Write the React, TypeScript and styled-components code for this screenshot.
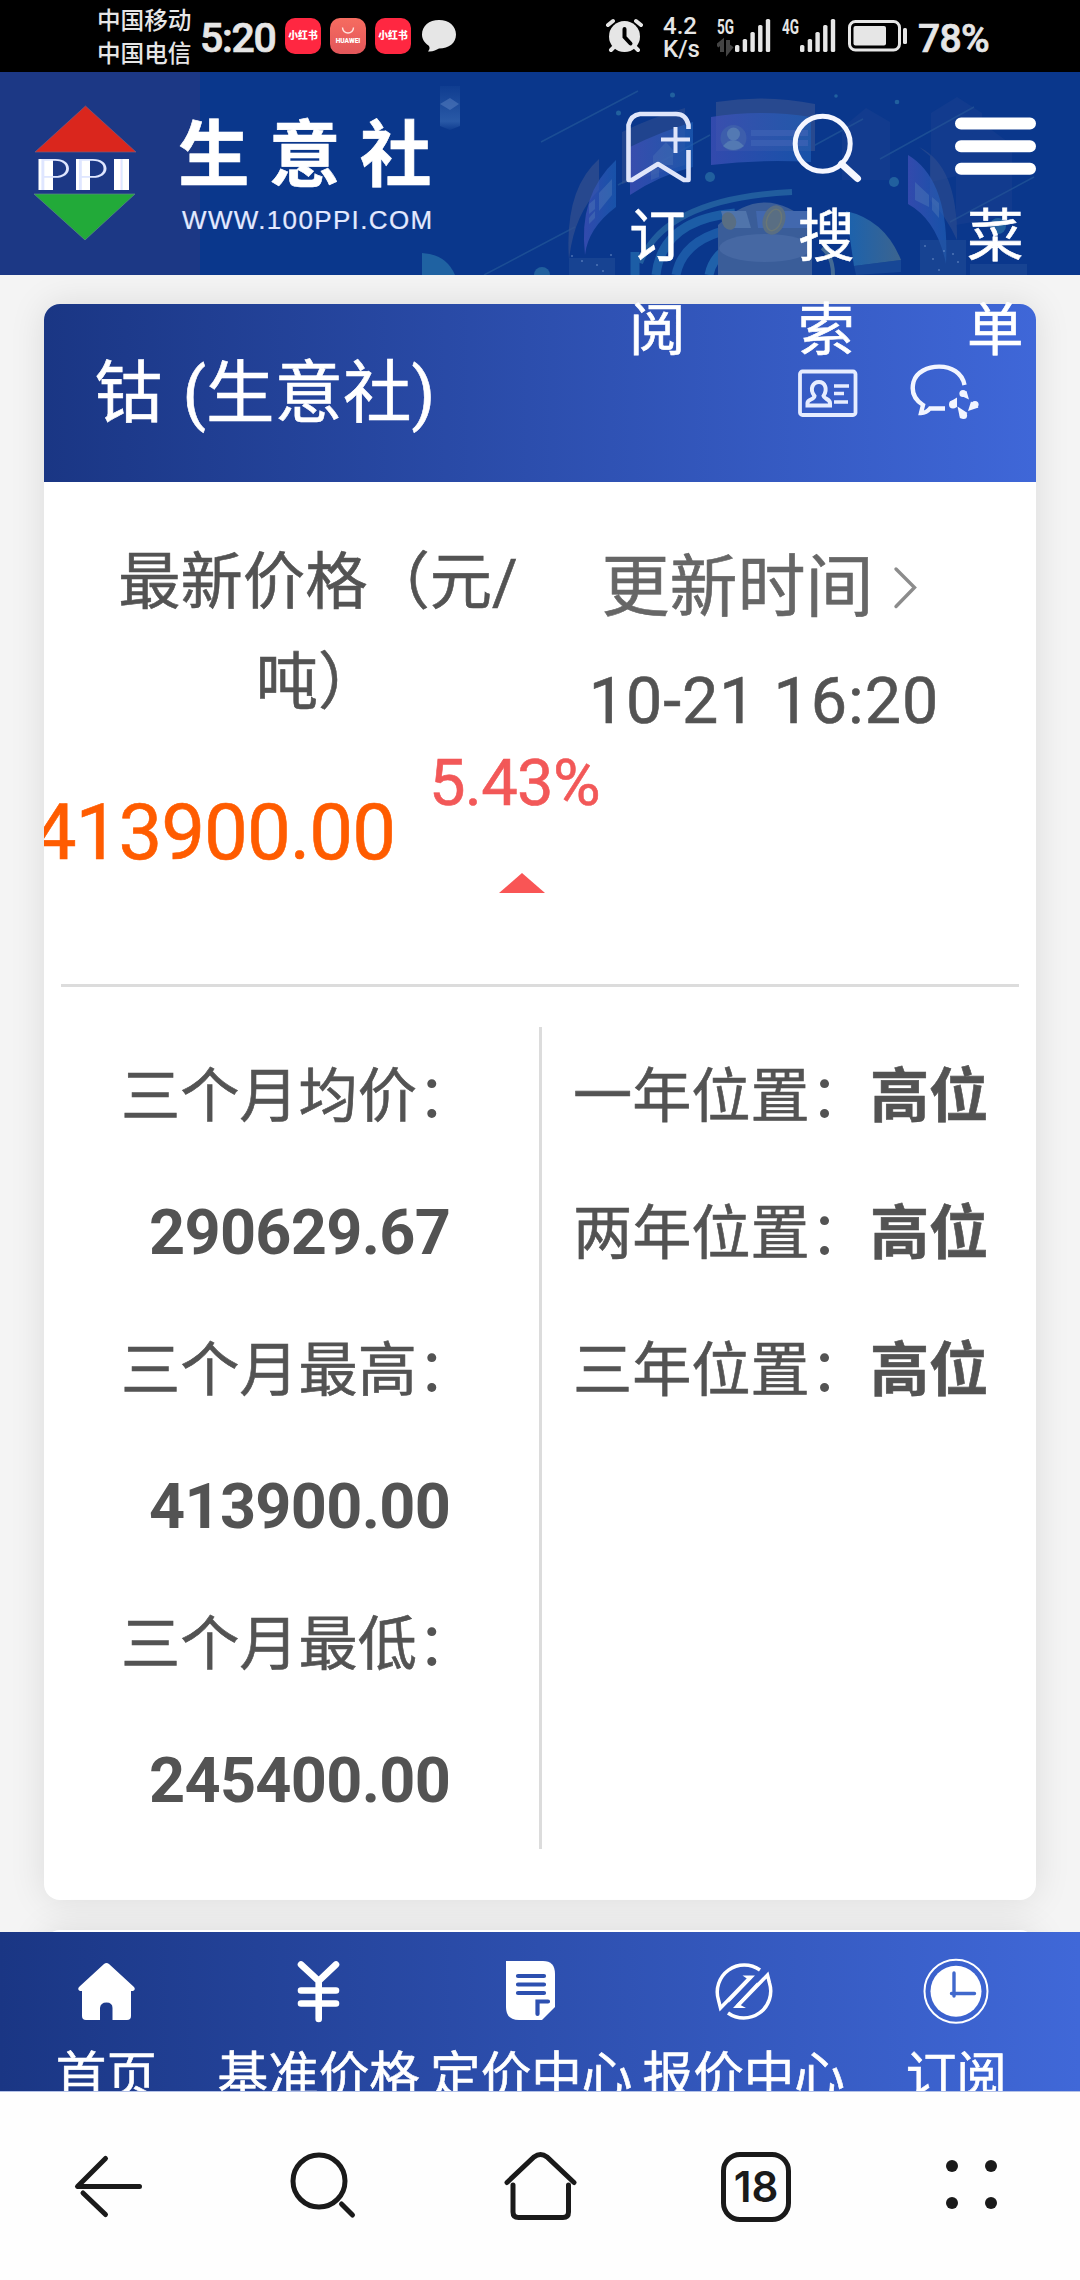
import React from "react";
import styled, { createGlobalStyle } from "styled-components";

const GlobalStyle = createGlobalStyle`
  html, body { margin: 0; padding: 0; background: #f4f4f4; }
  * { box-sizing: border-box; }
`;

const Screen = styled.div`
  width: 1080px;
  height: 2280px;
  display: flex;
  flex-direction: column;
  overflow: hidden;
  background: #f4f4f4;
  font-family: Roboto, "Noto Sans CJK SC", sans-serif;
  color: #535353;
  -webkit-text-stroke: 0.6px currentColor;
`;

/* ---------- status bar ---------- */

const StatusBar = styled.div`
  height: 72px;
  flex: none;
  background: #000;
  color: #e6e6e6;
  display: flex;
  align-items: center;
  padding-left: 97px;
  -webkit-text-stroke: 0;
`;

const Carriers = styled.div`
  width: 103px;
  font-size: 23.6px;
  font-weight: 500;
  line-height: 33px;
  white-space: nowrap;
  padding-top: 4px;
`;

const Clock = styled.div`
  width: 85px;
  font-size: 41px;
  font-weight: 500;
  line-height: 72px;
  padding-top: 4px;
  letter-spacing: -1.3px;
  -webkit-text-stroke: 0.7px currentColor;
`;

const AppBadges = styled.div`
  display: flex;
  gap: 9px;
  width: 136px;
`;

const AppBadge = styled.div<{ $tone: string }>`
  width: 36px;
  height: 36px;
  border-radius: 10px;
  background: ${(p) => p.$tone};
  color: #fff;
  display: flex;
  flex-direction: column;
  align-items: center;
  justify-content: center;
`;

const BadgeText = styled.span<{ $size: number }>`
  font-size: ${(p) => p.$size}px;
  font-weight: 900;
  line-height: 12px;
  white-space: nowrap;
`;

const StatusRight = styled.div`
  display: flex;
  align-items: center;
  margin-left: 146px;
`;

const Speed = styled.div`
  width: 34px;
  margin-left: 20px;
  font-size: 24px;
  font-weight: 500;
  line-height: 23px;
  white-space: nowrap;
  padding-top: 4px;
`;

const SignalGroup = styled.div<{ $left: number }>`
  margin-left: ${(p) => p.$left}px;
  display: flex;
`;

const Battery = styled.div`
  width: 72px;
  font-size: 39px;
  font-weight: 500;
  line-height: 72px;
  padding-top: 5px;
  margin-left: 10px;
  letter-spacing: -0.7px;
  -webkit-text-stroke: 0.7px currentColor;
`;

const Art = styled.svg`
  display: block;
  flex: none;
`;

type PicProps = { x: number; y: number; w: number; h: number; children: React.ReactNode };
const Pic = ({ x, y, w, h, children }: PicProps) => (
  <Art width={w} height={h} viewBox={`${x} ${y} ${w} ${h}`} fill="none">
    {children}
  </Art>
);

const Signal = ({ label, dim }: { label: string; dim?: boolean }) => (
  <Pic x={0} y={14} w={54} h={44}>
    <text x="0" y="34" fontSize="21" fontWeight="700" fill="#e6e6e6" textLength="17" lengthAdjust="spacingAndGlyphs">
      {label}
    </text>
    {dim && (
      <path d="M5 52V42L0 46M11 40V51L15 46" stroke="#444" strokeWidth="4" />
    )}
    {[7, 13, 20, 27, 33].map((h, i) => (
      <rect key={h} x={18 + i * 7.7} y={52 - h} width="4.4" height={h} rx="1.6" fill="#e6e6e6" />
    ))}
  </Pic>
);

/* ---------- site header ---------- */

const SiteHeader = styled.header`
  position: relative;
  z-index: 2;
  height: 203px;
  flex: none;
  display: flex;
  background: linear-gradient(90deg, #1c3885 0 200px, #0a378c 200px);
`;

const Backdrop = styled.div`
  position: absolute;
  inset: 0;
`;

const Brand = styled.div`
  position: relative;
  display: flex;
  width: 573px;
  flex: none;
  padding: 32px 0 0 32px;
`;

const LogoText = styled.text`
  font-family: Inter, sans-serif;
  font-size: 42.5px;
  font-weight: 200;
  fill: #dfe6ff;
  -webkit-text-stroke: 0;
`;

const BrandText = styled.div`
  color: #fff;
  margin-left: 40px;
  white-space: nowrap;
`;

const BrandName = styled.div`
  font-size: 71.5px;
  font-weight: 700;
  line-height: 90px;
  letter-spacing: 19.5px;
  padding-top: 7px;
`;

const BrandUrl = styled.div`
  font-family: "Liberation Sans", sans-serif;
  font-size: 26px;
  line-height: 30px;
  letter-spacing: 1.35px;
  color: #e3e9ff;
  margin: 4px 0 0 4px;
  -webkit-text-stroke: 0.2px currentColor;
`;

const Actions = styled.nav`
  position: relative;
  display: flex;
`;

const Action = styled.div`
  width: 169px;
  flex: none;
  display: flex;
  flex-direction: column;
  align-items: center;
`;

const ActionLabel = styled.span`
  width: 57px;
  color: #fff;
  font-size: 56.5px;
  line-height: 94px;
  word-break: break-all;
`;

/* ---------- price card ---------- */

const Main = styled.main`
  height: 1657px;
  flex: none;
  padding: 29px 44px 0;
  display: flex;
  flex-direction: column;
  gap: 30px;
`;

const Card = styled.section`
  flex: none;
  height: 1596px;
  border-radius: 16px;
  overflow: hidden;
  background: #fff;
  box-shadow: 0 0 36px rgba(0, 0, 0, 0.1);
  display: flex;
  flex-direction: column;
`;

const CardHeader = styled.div`
  height: 178px;
  flex: none;
  display: flex;
  align-items: center;
  background: linear-gradient(90deg, #1a3684, #3f67d8);
  padding: 0 57px 0 50px;
`;

const CardTitle = styled.h1`
  margin: 0;
  flex: 1;
  color: #fff;
  font-size: 68.5px;
  font-weight: 400;
  line-height: 100px;
  white-space: nowrap;
  word-spacing: 3px;
  padding-top: 2px;
`;

const HeaderIcons = styled.div`
  display: flex;
  align-items: center;
  gap: 50px;
`;

const Labels = styled.div`
  height: 256px;
  flex: none;
  display: flex;
  padding-top: 50px;
`;

const PriceLabel = styled.div`
  width: 500px;
  padding: 1px 0 0 48px;
  font-size: 62.3px;
  line-height: 100px;
  text-align: center;
  white-space: nowrap;
`;

const UpdateBlock = styled.div`
  width: 440px;
  display: flex;
  flex-direction: column;
  align-items: center;
`;

const UpdateTitle = styled.div`
  display: flex;
  align-items: center;
  gap: 18px;
  font-size: 68px;
  line-height: 112px;
  color: #666;
  padding-right: 9px;
`;

const UpdateTime = styled.div`
  font-size: 64.5px;
  line-height: 114px;
  letter-spacing: 1px;
  white-space: nowrap;
`;

const Quote = styled.div`
  height: 246px;
  flex: none;
  display: flex;
`;

const Price = styled.div`
  width: 351px;
  flex: none;
  display: flex;
  justify-content: flex-end;
  color: #ff5c00;
  font-size: 78px;
  line-height: 190px;
  letter-spacing: -1px;
  white-space: nowrap;
`;

const Change = styled.div`
  width: 172px;
  margin-left: 34px;
  display: flex;
  flex-direction: column;
  align-items: flex-start;
  color: #f25858;
  font-size: 65px;
  line-height: 90px;
  letter-spacing: -0.7px;
  white-space: nowrap;
`;

const UpTriangle = styled.i`
  width: 0;
  height: 0;
  margin: 45px 0 0 70px;
  border: solid transparent;
  border-width: 0 23.5px 20px;
  border-bottom-color: #f95555;
`;

const Rule = styled.hr`
  margin: 0 17px;
  height: 3px;
  flex: none;
  border: 0;
  background: #dcdcdc;
`;

const Stats = styled.div`
  margin-top: 40px;
  height: 822px;
  display: flex;
`;

const StatsColumn = styled.div<{ $wide?: boolean }>`
  width: ${(p) => (p.$wide ? 498 : 494)}px;
  flex: none;
  padding-left: ${(p) => (p.$wide ? 77 : 31)}px;
  border-right: ${(p) => (p.$wide ? "3px solid #dcdcdc" : "0")};
`;

const StatLine = styled.div`
  height: 137px;
  line-height: 139px;
  font-size: 59.2px;
  white-space: nowrap;
`;

const Colon = styled.span`
  margin-right: 1px;
  -webkit-text-stroke: 0;
`;

const StatNumber = styled.div`
  height: 137px;
  line-height: 137px;
  font-size: 63px;
  font-weight: 700;
  letter-spacing: -0.7px;
  padding-left: 28px;
  -webkit-text-stroke: 0;
`;

/* ---------- site tab bar ---------- */

const TabBar = styled.nav`
  height: 160px;
  flex: none;
  overflow: hidden;
  display: grid;
  grid-template-columns: repeat(5, 212.5px);
  background: linear-gradient(90deg, #1a3684, #4068d8);
  border-bottom: 1px solid #b4c2e8;
`;

const Tab = styled.div`
  display: flex;
  flex-direction: column;
  align-items: center;
  color: #fff;
  font-size: 50.6px;
  line-height: 70px;
  white-space: nowrap;
  padding-top: 24px;
`;

const TabLabel = styled.span`
  padding-top: 16px;
`;

/* ---------- browser toolbar ---------- */

const Toolbar = styled.footer`
  height: 188px;
  flex: none;
  background: #fefefe;
  display: grid;
  grid-template-columns: repeat(5, 216px);
  justify-items: center;
  padding-top: 54px;
  -webkit-text-stroke: 0;
`;

const TabCount = styled.div`
  width: 70px;
  height: 70px;
  margin-top: 6px;
  border: 5.5px solid #1a1a1a;
  border-radius: 19px;
  display: flex;
  align-items: center;
  justify-content: center;
  color: #1a1a1a;
  font-family: Inter, sans-serif;
  font-size: 42px;
  font-weight: 600;
  line-height: 58px;
`;

const Panels = () => (
  <Art width="1080" height="203" viewBox="0 72 1080 203" fill="none">
    <defs>
      <linearGradient id="panel" x1="0" x2="1">
        <stop offset="0" stopColor="#4050b8" stopOpacity=".75" />
        <stop offset="1" stopColor="#1f60b8" stopOpacity=".65" />
      </linearGradient>
      <linearGradient id="fan" x1="0" x2="1">
        <stop offset="0" stopColor="#1b62ae" />
        <stop offset="1" stopColor="#3c648f" />
      </linearGradient>
      <linearGradient id="pillar" x1="0" y1="0" x2="0" y2="1">
        <stop offset="0" stopColor="#3e70b8" stopOpacity=".1" />
        <stop offset=".8" stopColor="#3e70b8" stopOpacity=".6" />
        <stop offset="1" stopColor="#3e70b8" stopOpacity=".1" />
      </linearGradient>
    </defs>
    <path d="M440 86H460V126L450 130L440 126Z" fill="url(#pillar)" />
    <path d="M440 104L450 98L459 104L450 110Z" fill="#6b90cc" opacity=".4" />
    <path d="M422 253Q446 254 455 275H422Z" fill="#1f62a2" />
    <g stroke="#2c649e" strokeWidth="1.6" opacity=".5">
      <path d="M541 142L638 91M484 275L575 227M618 185L710 135M806 150L863 119M880 159L974 107M950 222L1034 177" />
    </g>
    <g fill="#21609e">
      <circle cx="672.500" cy="95" r="2.500" />
      <circle cx="618.500" cy="113" r="2.500" />
      <circle cx="710" cy="177" r="5" />
      <circle cx="894" cy="182" r="5" />
      <circle cx="897" cy="102" r="2.300" />
      <circle cx="836" cy="96" r="1.800" />
      <circle cx="542" cy="275" r="8" />
      <circle cx="998" cy="226" r="8" />
    </g>
    <g fill="#2a4a94" opacity=".25">
      <path d="M842 128L866 108L890 122V180H842Z" />
      <path d="M931 113L957 97L982 113V170L931 182Z" />
      <path d="M956 145L985 125L1012 145V215L956 225Z" />
    </g>
    <path d="M569 260Q564 190 599 159V190Q574 214 569 260Z" fill="#33508f" opacity=".7" />
    <path d="M585 255Q578 195 616 160V207Q588 228 585 255Z" fill="url(#panel)" />
    <path d="M599 193L612 179V195L599 211ZM589 204L595 199V209L589 214ZM589 218L595 211V218L589 224Z" fill="#5079b8" opacity=".45" />
    <path d="M622 132Q650 118 685 108V165L622 184Z" fill="#33508f" opacity=".55" />
    <path d="M630 147Q660 132 693 122V167Q660 175 630 195Z" fill="url(#panel)" />
    <path d="M653 156L666 142L673 150V165H653ZM651 170L659 168V177L651 180Z" fill="#5079b8" opacity=".35" />
    <path d="M716 102Q765 94 815 104V151H716Z" fill="#28498f" />
    <path d="M711 117Q760 109 811 117V162Q760 159 711 165Z" fill="url(#panel)" />
    <circle cx="733.500" cy="138" r="13" fill="#3d5eac" />
    <circle cx="733.500" cy="134" r="6.500" fill="#5379b3" />
    <path d="M723 146Q733 134 744 146Q733 154 723 146Z" fill="#5379b3" />
    <path d="M751 133H808M751 143H808" stroke="#3e62b4" strokeWidth="6" opacity=".75" />
    <path d="M919 147Q958 166 957 240Q946 216 930 200V156Z" fill="#33508f" opacity=".55" />
    <path d="M908 155Q950 180 946 264Q937 220 908 204Z" fill="url(#panel)" />
    <path d="M915 182L929 195V207L915 200ZM932 197L939 203V218L932 210Z" fill="#5079b8" opacity=".45" />
    <path d="M640 263Q665 198 792 192" stroke="#215d9e" strokeWidth="6" />
    <path d="M635 275V252M656 275Q662 220 735 213" stroke="#1c5da6" strokeWidth="9" />
    <path d="M676 275Q684 233 750 226" stroke="#1b59a7" strokeWidth="9" />
    <path d="M709 275Q715 244 760 238" stroke="#1f61aa" strokeWidth="9" />
    <path d="M718 275V225Q765 180 812 225V275Z" fill="#3a5d99" />
    <path d="M721 211H746L751 228H730L724 222Z" fill="#5074ab" />
    <path d="M756 211H810V228H758Z" fill="#4268ae" />
    <ellipse cx="765" cy="248" rx="46" ry="14" fill="#4668a3" />
    <ellipse cx="729" cy="221" rx="7" ry="9" fill="#596e83" transform="rotate(-20 729 221)" />
    <ellipse cx="774" cy="220" rx="11" ry="15" fill="#596e83" transform="rotate(20 774 220)" />
    <ellipse cx="774" cy="220" rx="7" ry="11" stroke="#6a7776" strokeWidth="1.500" transform="rotate(20 774 220)" />
    <path d="M822 248Q833 256 833 275" stroke="#446b95" strokeWidth="4" />
    <path d="M846 211Q885 220 901 260L854 266Z" fill="url(#fan)" />
    <path d="M854 266L901 260V272L856 275Z" fill="#24589f" opacity=".5" />
    <path d="M569 258H615V275H569ZM920 240H966V275H920ZM970 264H1027V275H970Z" fill="#2a549a" opacity=".4" />
    <g fill="#7596cc" opacity=".6">
      {[[572, 256], [582, 261], [597, 265], [603, 271], [611, 255], [925, 246], [933, 259], [944, 251], [953, 254], [958, 262], [939, 270]].map(([cx, cy]) => (
        <circle key={cx} cx={cx} cy={cy} r="1" />
      ))}
    </g>
  </Art>
);

export default function App() {
  return (
    <Screen>
      <GlobalStyle />
      <StatusBar>
        <Carriers>中国移动<br />中国电信</Carriers>
        <Clock>5:20</Clock>
        <AppBadges>
          <AppBadge $tone="#ff2741"><BadgeText $size={9.8}>小红书</BadgeText></AppBadge>
          <AppBadge $tone="linear-gradient(#f66c60, #e2565a)">
            <Pic x={0} y={0} w={14} h={9}>
              <path d="M1.500 1.500A5.500 5.500 0 0 0 12.500 1.500" stroke="#ffe3df" strokeWidth="1.400" />
            </Pic>
            <BadgeText $size={6.6}>HUAWEI</BadgeText>
          </AppBadge>
          <AppBadge $tone="#ff2741"><BadgeText $size={9.8}>小红书</BadgeText></AppBadge>
        </AppBadges>
        <Pic x={421} y={18} w={36} h={38}>
          <path d="M439 21C449 21 456 27 456 35.500S449 49.500 439 49.500C436 51 433 53 428 52.500C430 50 430 48 428.500 46.500C424.500 44 422 40 422 35.500C422 27 429 21 439 21Z" fill="#e6e6e6" />
        </Pic>
        <StatusRight>
          <Pic x={604} y={18} w={40} h={38}>
            <circle cx="625.500" cy="37.500" r="15.500" fill="#e6e6e6" />
            <path d="M609 26L614 22M642 26L637 22M612 51L615 48M639 51L636 48" stroke="#e6e6e6" strokeWidth="4" strokeLinecap="round" />
            <path d="M625.500 30V38L631.500 44.500" stroke="#000" strokeWidth="4" strokeLinecap="round" />
          </Pic>
          <Speed>4.2<br />K/s</Speed>
          <SignalGroup $left={20}><Signal label="5G" dim /></SignalGroup>
          <SignalGroup $left={11}><Signal label="4G" /></SignalGroup>
          <SignalGroup $left={11}>
            <Pic x={848} y={19} w={61} h={36}>
              <rect x="850.500" y="22.500" width="50" height="28.500" rx="6" stroke="#e6e6e6" strokeWidth="3" />
              <rect x="854.500" y="27" width="32.500" height="19.500" rx="2" fill="#e6e6e6" />
              <rect x="904" y="29" width="4" height="16" rx="1.500" fill="#e6e6e6" />
            </Pic>
          </SignalGroup>
          <Battery>78%</Battery>
        </StatusRight>
      </StatusBar>

      <SiteHeader>
        <Backdrop><Panels /></Backdrop>
        <Brand>
          <Pic x={32} y={104} w={106} h={138}>
            <path d="M85.500 106L136 152H35Z" fill="#da261d" stroke="#7c5c7b" strokeWidth=".7" />
            <path d="M34 194H135L85 240Z" fill="#22aa39" stroke="#5c8a86" strokeWidth=".7" />
            <path d="M38.500 159H53V190H38.500ZM76 159H90V190H76ZM114 159H129V190H114Z" fill="#fff" />
            <LogoText x="35" y="190" textLength="38" lengthAdjust="spacingAndGlyphs">P</LogoText>
            <LogoText x="72.500" y="190" textLength="38" lengthAdjust="spacingAndGlyphs">P</LogoText>
            <LogoText x="116" y="190">I</LogoText>
          </Pic>
          <BrandText>
            <BrandName>生意社</BrandName>
            <BrandUrl>WWW.100PPI.COM</BrandUrl>
          </BrandText>
        </Brand>
        <Actions>
          <Action>
            <Pic x={616} y={72} w={84} h={118}>
              <path d="M688.500 129V125Q686 114 676 114H640Q631 115 628.500 125V180L632 180L658 164L684 180H688.500V150" stroke="#dfe5fa" strokeWidth="4.600" strokeLinejoin="round" />
              <path d="M675.500 127V153M661 139.500H690" stroke="#dfe5fa" strokeWidth="4" />
            </Pic>
            <ActionLabel>订阅</ActionLabel>
          </Action>
          <Action>
            <Pic x={785} y={72} w={84} h={118}>
              <circle cx="822.700" cy="143.700" r="27.500" stroke="#f4f6ff" strokeWidth="5" />
              <path d="M841.500 164L857.500 178.500" stroke="#f4f6ff" strokeWidth="7" strokeLinecap="round" />
            </Pic>
            <ActionLabel>搜索</ActionLabel>
          </Action>
          <Action>
            <Pic x={954.5} y={72} w={84} h={118}>
              <path d="M961.500 123.500H1030.500M961.500 146.200H1030.500M961.500 168.800H1030.500" stroke="#fff" strokeWidth="12" strokeLinecap="round" />
            </Pic>
            <ActionLabel>菜单</ActionLabel>
          </Action>
        </Actions>
      </SiteHeader>

      <Main>
        <Card>
          <CardHeader>
            <CardTitle>钴 (生意社)</CardTitle>
            <HeaderIcons>
              <Pic x={797} y={362} w={62} h={62}>
                <rect x="800" y="371.500" width="55.500" height="43.500" rx="2.500" stroke="#e6ecff" strokeWidth="3.800" />
                <path d="M814.500 396C809 389 813 382 819 382S828 389 823.500 396C824 399 830 399 830 403V405.500H807.500V403C807.500 399 814 400 814.500 396Z" stroke="#e6ecff" strokeWidth="4" />
                <path d="M834 386H849M834 393.500H844M834 402H848" stroke="#e6ecff" strokeWidth="3.400" />
              </Pic>
              <Pic x={909} y={362} w={70} h={62}>
                <path d="M964.500 385C960 360 919 362 913.500 382C911 392 915 400 923 405L921 413C925 413 928 411 930 408.500H945" stroke="#f2f5ff" strokeWidth="4.400" />
                <g fill="#f2f5ff">
                  <path d="M959.500 395L966.500 391L969 399.500ZM949.500 402L957 397.500L957 407.500ZM967.500 413L960 418.500L957.500 406.500ZM978.500 407.500L971 401.500L968 411Z" />
                  <circle cx="963" cy="393.500" r="3.600" />
                  <circle cx="953" cy="404.500" r="4" />
                  <circle cx="963.500" cy="415.500" r="3.600" />
                  <circle cx="975" cy="404.500" r="3.600" />
                </g>
              </Pic>
            </HeaderIcons>
          </CardHeader>
          <Labels>
            <PriceLabel>最新价格（元/<br />吨）</PriceLabel>
            <UpdateBlock>
              <UpdateTitle>
                更新时间
                <Pic x={892} y={564} w={26} h={48}>
                  <path d="M896 569L914.500 587.500L896 606.500" stroke="#8c8c8c" strokeWidth="3.400" strokeLinecap="round" />
                </Pic>
              </UpdateTitle>
              <UpdateTime>10-21 16:20</UpdateTime>
            </UpdateBlock>
          </Labels>
          <Quote>
            <Price>413900.00</Price>
            <Change>
              5.43%
              <UpTriangle />
            </Change>
          </Quote>
          <Rule />
          <Stats>
            <StatsColumn $wide>
              <StatLine>三个月均价<Colon>：</Colon></StatLine>
              <StatNumber>290629.67</StatNumber>
              <StatLine>三个月最高<Colon>：</Colon></StatLine>
              <StatNumber>413900.00</StatNumber>
              <StatLine>三个月最低<Colon>：</Colon></StatLine>
              <StatNumber>245400.00</StatNumber>
            </StatsColumn>
            <StatsColumn>
              <StatLine>一年位置<Colon>：</Colon><b>高位</b></StatLine>
              <StatLine>两年位置<Colon>：</Colon><b>高位</b></StatLine>
              <StatLine>三年位置<Colon>：</Colon><b>高位</b></StatLine>
            </StatsColumn>
          </Stats>
        </Card>
        <Card />
      </Main>

      <TabBar>
        <Tab>
          <Pic x={71} y={1956} w={70} h={70}>
            <path d="M104 1964Q106.500 1962 109 1964L134 1987Q136 1989.500 133 1991H131V2016Q131 2020 127 2020H112.500V2008Q112.500 2002.500 106.500 2002.500T100 2008V2020H86Q82 2020 82 2016V1991H80Q77 1989.500 79 1987Z" fill="#fff" />
          </Pic>
          <TabLabel>首页</TabLabel>
        </Tab>
        <Tab>
          <Pic x={284} y={1956} w={70} h={70}>
            <path d="M301 1964.500L318.700 1981L336 1964.500M318.700 1981V2019M301 1990.500H336M301 2003.500H336" stroke="#fff" strokeWidth="6.600" strokeLinecap="round" />
          </Pic>
          <TabLabel>基准价格</TabLabel>
        </Tab>
        <Tab>
          <Pic x={496} y={1956} w={70} h={70}>
            <path d="M506 1961H543Q555 1961 555 1974V2007L542 2020H519Q506 2020 506 2007Z" fill="#fff" />
            <path d="M518 1976H544M518 1984.500H544M518 1993H544M548 2001.500H537.500V2014" stroke="#2d50b0" strokeWidth="4.200" strokeLinecap="round" />
          </Pic>
          <TabLabel>定价中心</TabLabel>
        </Tab>
        <Tab>
          <Pic x={708.5} y={1956} w={70} h={70}>
            <path d="M759.500 1970A27 27 0 0 0 718 2000L720 2008L750 1977M727.500 2013A27 27 0 0 0 769 1983L767 1975L737 2006" stroke="#fff" strokeWidth="3.500" />
            <path d="M742 1975.500H754.500L728 2003L731 1996L747 1979ZM745.500 2008H732.500L757 1982L755 1988L740 2005Z" fill="#fff" />
          </Pic>
          <TabLabel>报价中心</TabLabel>
        </Tab>
        <Tab>
          <Pic x={920.5} y={1956} w={70} h={70}>
            <circle cx="955.500" cy="1991.300" r="31.500" stroke="#fff" strokeWidth="2" />
            <circle cx="955.500" cy="1991.300" r="25.500" fill="#fff" />
            <path d="M953.500 1973V1996M951 1993.500H974" stroke="#4068cc" strokeWidth="3.400" strokeLinecap="round" />
          </Pic>
          <TabLabel>订阅</TabLabel>
        </Tab>
      </TabBar>

      <Toolbar>
        <Pic x={68} y={2146} w={80} h={80}>
          <path d="M105.500 2158.500L77.500 2186.500H139.500M83 2193L105.500 2214.500" stroke="#1a1a1a" strokeWidth="5" strokeLinecap="round" strokeLinejoin="round" />
        </Pic>
        <Pic x={284} y={2146} w={80} h={80}>
          <circle cx="319" cy="2181" r="26" stroke="#1a1a1a" strokeWidth="5" />
          <path d="M341.500 2204L352.500 2215" stroke="#1a1a1a" strokeWidth="5" strokeLinecap="round" />
        </Pic>
        <Pic x={500} y={2146} w={80} h={80}>
          <path d="M507 2182.500L534 2157Q540.500 2152 547 2157L574 2182.500M513 2185V2212Q513 2217.500 518.500 2217.500H563Q568.500 2217.500 568.500 2212V2185" stroke="#1a1a1a" strokeWidth="5" strokeLinecap="round" />
        </Pic>
        <TabCount>18</TabCount>
        <Pic x={932} y={2146} w={80} h={80}>
          {[952, 991].map((cx) =>
            [2166, 2203].map((cy) => <circle key={`${cx}-${cy}`} cx={cx} cy={cy} r="6" fill="#1a1a1a" />)
          )}
        </Pic>
      </Toolbar>
    </Screen>
  );
}
